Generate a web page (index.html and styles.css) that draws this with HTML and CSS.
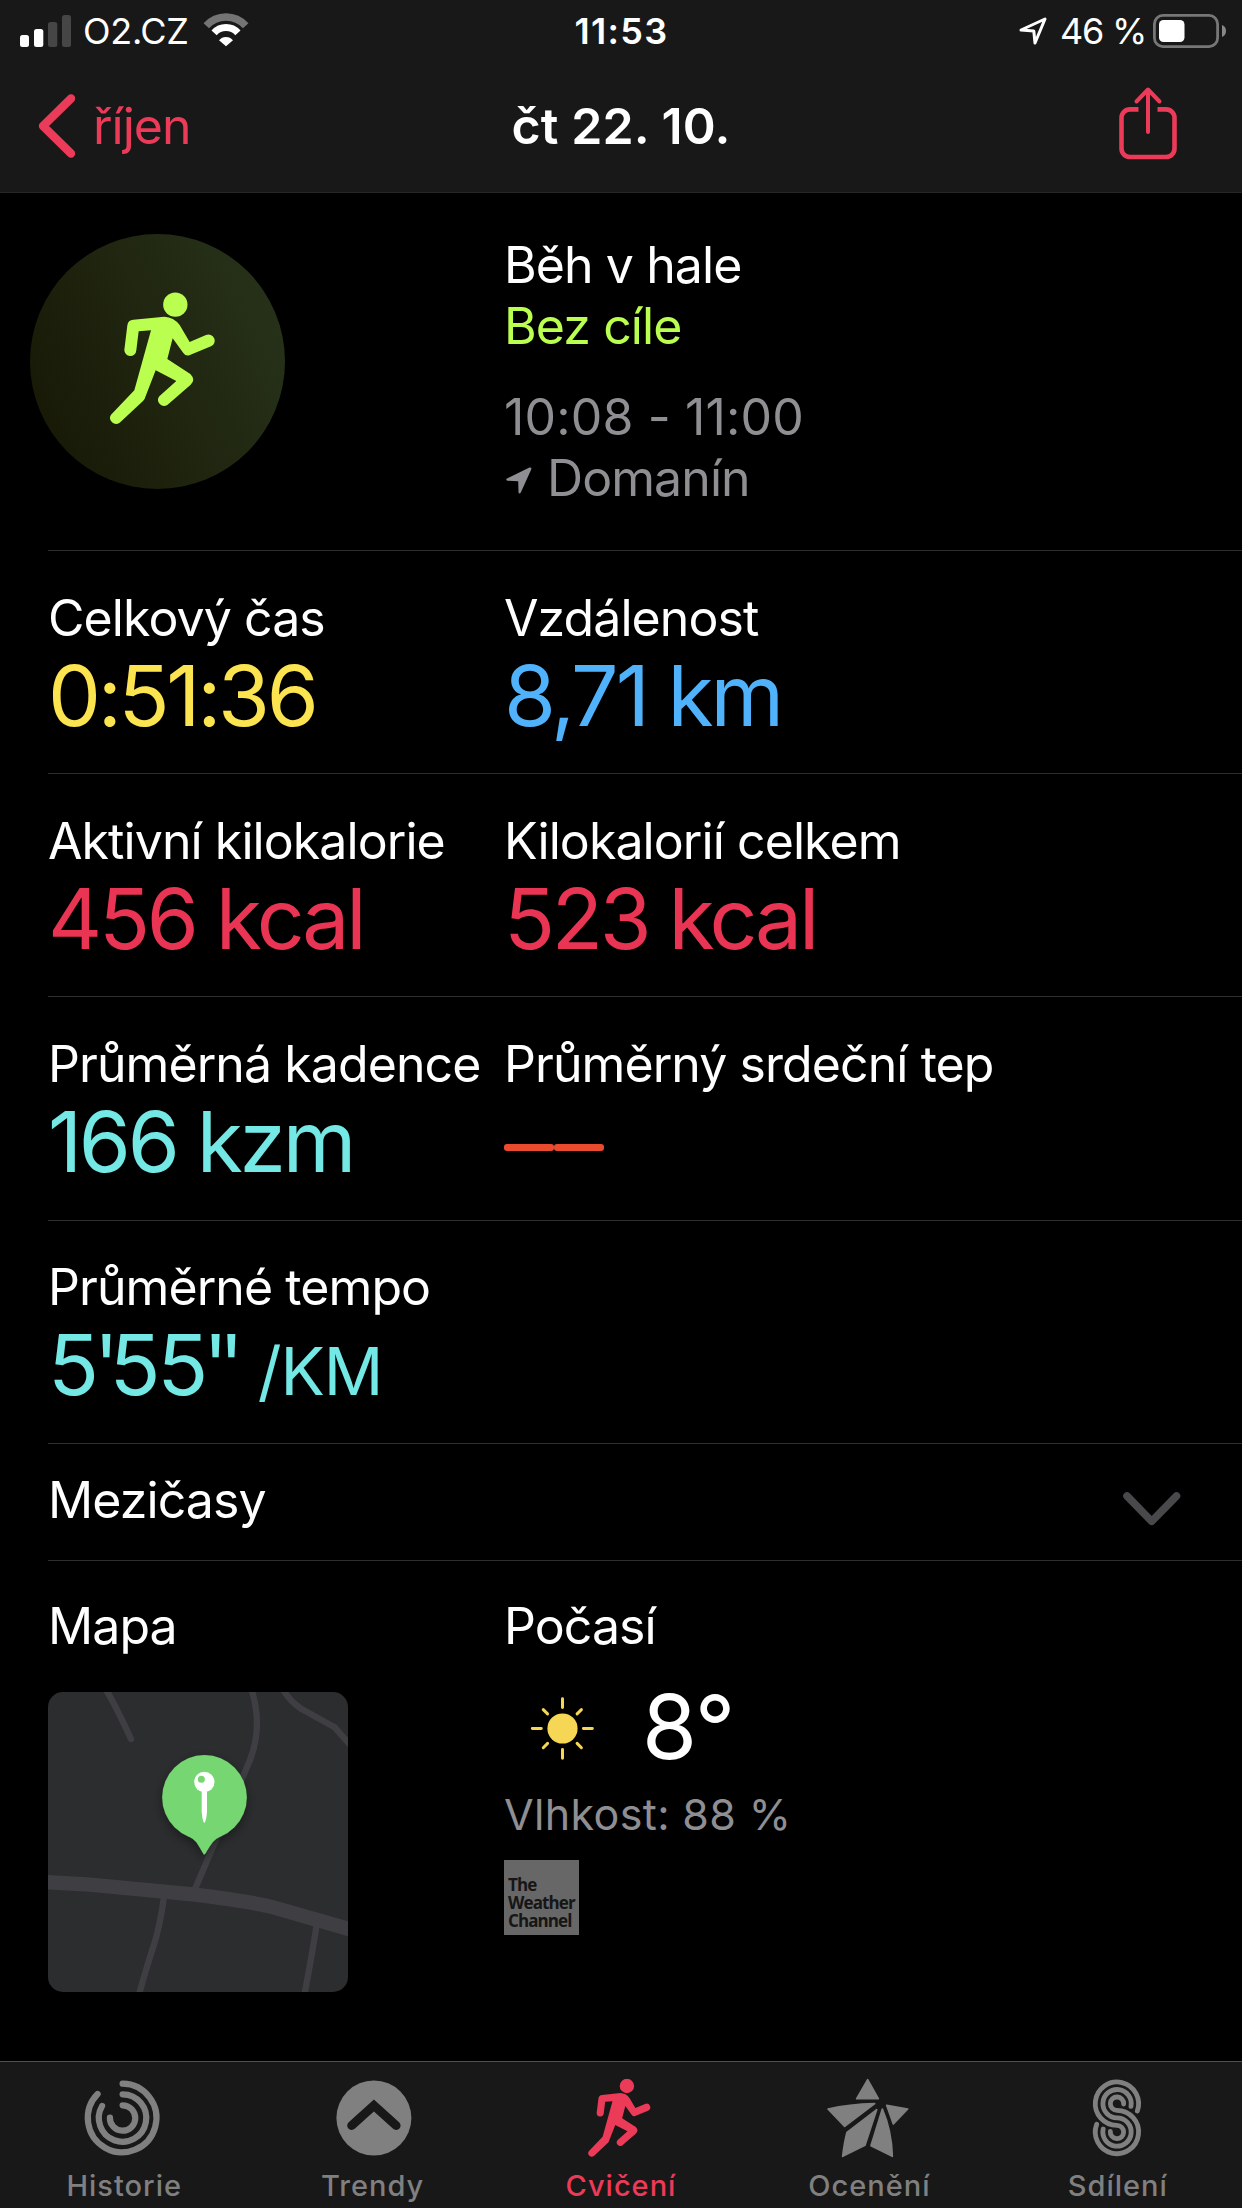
FILE: index.html
```html
<!DOCTYPE html>
<html lang="cs">
<head>
<meta charset="utf-8">
<title>čt 22. 10.</title>
<link rel="stylesheet" href="styles.css">
</head>
<body>
<svg class="defs" aria-hidden="true">
  <symbol id="runner" viewBox="329 277 318 400">
    <circle cx="528" cy="315" r="36.5"/>
    <path d="M495 351Q523 352 541 376L571 427L620 406A18 18 0 0 1 635 440L570 467Q559 470 552 460L520 416L504 478L573 523Q590 540 574 555L504 616A18 18 0 0 1 480 590L531 544L469 512L438 592Q437 598 431 604L361 669A18 18 0 0 1 335 645L405 572L455 392L418 395L411 452A18 18 0 0 1 375 450L384 377Q386 361 402 360Z"/>
  </symbol>
</svg>
<div class="screen">
  <header class="header">
    <div class="status">
      <div class="status-left">
        <svg class="signal" viewBox="0 0 51 32">
          <rect x="0" y="20" width="9" height="12" rx="2.5" fill="#fff"/>
          <rect x="14" y="14" width="9.3" height="18" rx="2.5" fill="#fff"/>
          <rect x="28" y="7" width="9.3" height="25" rx="2.5" fill="#464646"/>
          <rect x="42" y="0" width="9" height="32" rx="2.5" fill="#464646"/>
        </svg>
        <span class="carrier">O2.CZ</span>
        <svg class="wifi" viewBox="0 0 46 34" fill="none">
          <path d="M3.3 12.8A26.5 26.5 0 0 1 42.7 12.8" stroke="#747474" stroke-width="7.4"/>
          <path d="M11.1 19.8A16 16 0 0 1 34.9 19.8" stroke="#fff" stroke-width="7"/>
          <path d="M16 27.3A9 9 0 0 1 30 27.3L23 33.3Z" fill="#fff"/>
        </svg>
      </div>
      <span class="clock">11:53</span>
      <div class="status-right">
        <svg class="loc" viewBox="0 0 28 28" fill="none" stroke="#fff" stroke-width="3" stroke-linejoin="round">
          <path d="M2 13L26 2L16 26L14.8 14Z"/>
        </svg>
        <span class="percent">46 %</span>
        <svg class="battery" viewBox="0 0 74 34">
          <rect x="1.4" y="1.4" width="63.2" height="31.2" rx="8.5" fill="none" stroke="#777" stroke-width="2.8"/>
          <rect x="6" y="6" width="25.5" height="22" rx="4.5" fill="#fff"/>
          <path d="M69 11Q73 12.5 73 17Q73 21.5 69 23Z" fill="#888"/>
        </svg>
      </div>
    </div>
    <nav class="nav">
      <a class="back">
        <svg class="back-icon" viewBox="0 0 38 64" fill="none" stroke="#ec3a59" stroke-width="8.4" stroke-linecap="round" stroke-linejoin="round"><path d="M33 4.5L5 32L33 59.500"/></svg>
        <span>říjen</span>
      </a>
      <h1 class="title">čt 22. 10.</h1>
      <svg class="share" viewBox="0 0 58 74" fill="none" stroke="#ec3a59" stroke-width="4.6">
        <path d="M19.5 22.4H11A8.5 8.5 0 0 0 2.5 31V61.5A8.5 8.5 0 0 0 11 70H47A8.500 8.500 0 0 0 55.500 61.500V31A8.500 8.500 0 0 0 47 22.400H38.500"/>
        <path d="M29 45V3.500M17.500 14.500L29 2.500L40.500 14.500" stroke-width="4" stroke-linecap="round" stroke-linejoin="round"/>
      </svg>
    </nav>
  </header>

  <main class="main">
    <section class="row summary">
      <div class="badge"><svg class="badge-icon"><use href="#runner"/></svg></div>
      <div class="summary-text">
        <div>Běh v hale</div>
        <div class="goal">Bez cíle</div>
        <div class="muted period">10:08 - 11:00</div>
        <div class="muted place">
          <svg class="place-icon" viewBox="0 0 26 27"><path d="M1 11.500L23.500 .5Q26 0 25.200 2.500L14.800 25.500Q13.500 27.500 12.500 25.500L12.200 14.200L1.500 13.800Q-.8 13 1 11.500Z"/></svg>
          <span>Domanín</span>
        </div>
      </div>
    </section>

    <section class="row metrics">
      <div><div class="label">Celkový čas</div><div class="value yellow">0:51:36</div></div>
      <div><div class="label">Vzdálenost</div><div class="value blue">8,71 km</div></div>
    </section>
    <section class="row metrics">
      <div><div class="label">Aktivní kilokalorie</div><div class="value red">456 kcal</div></div>
      <div><div class="label">Kilokalorií celkem</div><div class="value red">523 kcal</div></div>
    </section>
    <section class="row metrics tall">
      <div><div class="label">Průměrná kadence</div><div class="value cyan">166 kzm</div></div>
      <div><div class="label">Průměrný srdeční tep</div><div class="dashes"><i></i><i></i></div></div>
    </section>
    <section class="row metrics">
      <div><div class="label">Průměrné tempo</div><div class="value cyan">5<span class="tick">'</span>55<span class="tick">''</span> <small class="unit">/KM</small></div></div>
    </section>

    <section class="row splits">
      <span>Mezičasy</span>
      <svg class="chevron" viewBox="0 0 58 34" fill="none" stroke="#49494b" stroke-width="7.6" stroke-linecap="round" stroke-linejoin="round"><path d="M4 4L28.700 29.300L53.500 4"/></svg>
    </section>

    <section class="extras">
      <div>
        <div class="label">Mapa</div>
        <svg class="map" viewBox="144 336 900 900">
          <defs>
            <filter id="pin-shadow" x="-30%" y="-30%" width="160%" height="160%">
              <feDropShadow dx="0" dy="12" stdDeviation="16" flood-color="#000" flood-opacity=".4"/>
            </filter>
          </defs>
          <rect x="144" y="336" width="900" height="900" fill="#2c2d2f"/>
          <g fill="none" stroke="#3f3f43" stroke-width="19" stroke-linecap="round" stroke-linejoin="round">
            <path d="M318 330Q345 372 393 477"/>
            <path d="M755 330Q789 440 750 540L586 925"/>
            <path d="M850 330Q870 364 906 388L1004 442L1050 494"/>
            <path d="M492 950Q480 1040 460 1100T418 1240"/>
            <path d="M950 1035Q935 1130 914 1240"/>
            <path d="M130 906L270 914L586 944Q760 966 820 982L1060 1051" stroke-width="43"/>
          </g>
          <g fill="#76d672" filter="url(#pin-shadow)">
            <circle cx="613.5" cy="652" r="127"/>
            <path d="M564 768Q580 776 589 787Q598 800 609 820Q613 827 617 820Q628 800 638 787Q647 776 663 768Z"/>
          </g>
          <circle cx="613" cy="606" r="30.5" fill="#fff"/>
          <circle cx="604" cy="598" r="10.5" fill="#76d672"/>
          <path d="M605 630H621V695Q619 722 613 729Q607 722 605 695Z" fill="#fff"/>
        </svg>
      </div>
      <div>
        <div class="label">Počasí</div>
        <div class="weather">
          <svg class="sun" viewBox="153 347 190 190" stroke="#f6d755" stroke-width="9" stroke-linecap="round">
            <circle cx="248" cy="442" r="45.5" fill="#f6d755" stroke="none"/>
            <path d="M248 352V379M248 505V532M157 442H184M311 442H338M190 385L203 398M305 385L292 398M190 500L203 487M305 500L292 487"/>
          </svg>
          <span class="temp">8°</span>
        </div>
        <div class="muted humidity">Vlhkost: 88 %</div>
        <div class="twc">The<br>Weather<br>Channel</div>
      </div>
    </section>
  </main>

  <footer class="tabs">
    <a class="tab">
      <svg class="tab-icon" viewBox="-38.600 -40 80 80" fill="none" stroke="currentColor" stroke-width="6.2" stroke-linecap="round">
        <path d="M0 -34.300A34.300 34.300 0 1 1 -25 -24"/>
        <path d="M0 -23.700A23.700 23.700 0 1 1 -20.500 -12"/>
        <path d="M0 -12.700A12.700 12.700 0 1 1 -12.700 -.5"/>
      </svg>
      <span>Historie</span>
    </a>
    <a class="tab">
      <svg class="tab-icon" viewBox="-40.900 -40 80 80">
        <circle r="37.5" fill="currentColor"/>
        <path d="M-22.200 7.500L0 -12.500L22.200 7.500" fill="none" stroke="#181818" stroke-width="9" stroke-linecap="round"/>
      </svg>
      <span>Trendy</span>
    </a>
    <a class="tab active">
      <svg class="tab-icon" viewBox="0 0 80 80"><use href="#runner" x="-2" y="0.5" width="80" height="79"/></svg>
      <span>Cvičení</span>
    </a>
    <a class="tab">
      <svg class="tab-icon" viewBox="85 58 240 240" fill="currentColor" stroke="currentColor" stroke-width="5" stroke-linejoin="round">
        <path d="M201 63L233 120H168Z"/>
        <path d="M82 151Q145 137 222 135L132 203Z"/>
        <path d="M258 140L321 151L278 196Z"/>
        <path d="M228 153L139 221Q131 250 126 293L193 260Z"/>
        <path d="M245 151Q273 215 275 293L211 261Z"/>
      </svg>
      <span>Ocenění</span>
    </a>
    <a class="tab">
      <svg class="tab-icon" viewBox="834 54 240 240" fill="none" stroke="currentColor" stroke-width="14.500" stroke-linecap="round">
        <path d="M1012 153A65 65 0 1 0 951 196A20 20 0 1 1 931 214"/>
        <path d="M993 139A42.500 42.500 0 1 0 951 173.500A42.500 42.500 0 1 1 909.500 207"/>
        <path d="M971 132A20 20 0 1 0 951 151A65 65 0 1 1 890 193"/>
      </svg>
      <span>Sdílení</span>
    </a>
  </footer>
</div>
</body>
</html>
```
FILE: styles.css
```css
* { box-sizing: border-box; }

body {
  margin: 0;
  background: #000;
  color: #fff;
  font-family: Inter, "Liberation Sans", sans-serif;
  font-size: 50px;
  letter-spacing: -0.92px;
}

svg { display: block; flex: none; overflow: visible; }
.defs { position: absolute; width: 0; height: 0; }

.screen {
  width: 1242px;
  height: 2208px;
  display: flex;
  flex-direction: column;
  overflow: hidden;
}

/* Header */
.header { background: #181818; border-bottom: 1px solid #272727; height: 193px; }

.status {
  display: grid;
  grid-template-columns: 1fr auto 1fr;
  align-items: center;
  height: 60px;
  padding: 2px 15px 0 20px;
  font-size: 36px;
  line-height: 58px;
  letter-spacing: -0.3px;
}
.status-left, .status-right { display: flex; align-items: center; }
.status-right { justify-content: flex-end; }
.signal { width: 51px; height: 32px; margin-right: 12px; }
.carrier { width: 105px; margin-right: 15px; white-space: nowrap; }
.wifi { width: 46px; height: 34px; margin-bottom: 2px; }
.clock { margin-right: 4px; font-weight: 600; letter-spacing: 1.3px; }
.loc { width: 28px; height: 28px; margin-right: 13px; }
.percent { width: 86px; margin-right: 7px; letter-spacing: -1.2px; white-space: nowrap; }
.battery { width: 74px; height: 34px; }

.nav {
  display: grid;
  grid-template-columns: 1fr auto 1fr;
  align-items: center;
  height: 132px;
  padding: 0 38px;
  line-height: 132px;
}
.back { display: flex; align-items: center; gap: 17px; color: #ec3a59; letter-spacing: -1px; }
.back-icon { width: 38px; height: 64px; }
.title { margin: 0; font-size: 50px; font-weight: 600; letter-spacing: 0.1px; }
.share { width: 58px; height: 74px; justify-self: end; margin: 0 27px 4px 0; }

/* Workout details */
.main { flex: 1; padding-left: 48px; line-height: 60px; }
.row { border-bottom: 1px solid #2e2e2f; }
.summary, .metrics, .extras { display: grid; grid-template-columns: 456px 1fr; }
.muted { color: #8e8e93; }

.summary { height: 358px; padding-top: 41px; }
.badge {
  display: flex;
  align-items: center;
  justify-content: center;
  width: 255px;
  height: 255px;
  margin-left: -18px;
  padding: 0 0 5px 8px;
  border-radius: 50%;
  background: linear-gradient(65deg, #161804 5%, #1f240f 45%, #28331a 95%);
}
.badge-icon { width: 106px; height: 133.3px; fill: #baff4f; }
.summary-text { padding-top: 1px; line-height: 61px; }
.goal { color: #baff4f; }
.period { margin-top: 30px; letter-spacing: 0.15px; }
.place { display: flex; align-items: center; gap: 15px; }
.place-icon { width: 26px; height: 27px; margin: 4px 0 0 2px; fill: #8e8e93; }

.metrics { height: 223px; padding-top: 37px; }
.metrics.tall { height: 224px; }
.metrics.tall + .metrics { padding-top: 36px; }
.label { white-space: nowrap; }
.value { margin-top: 3px; font-size: 84px; line-height: 90px; letter-spacing: -3.3px; white-space: nowrap; }
.tick { margin-left: -2px; letter-spacing: -9.5px; }
.unit { margin-left: 3px; font-size: 66px; letter-spacing: -1px; }
.yellow { color: #fbe44f; }
.blue { color: #50b2fb; letter-spacing: -3px; }
.red { color: #e93453; }
.cyan { color: #74e8e4; }
.dashes { display: flex; padding-top: 50px; }
.dashes i { width: 50px; height: 7px; border-radius: 3px; background: #ea4b2e; }

.splits {
  display: flex;
  align-items: center;
  justify-content: space-between;
  height: 117px;
  padding: 0 61px 5px 0;
}
.chevron { width: 58px; height: 34px; margin-top: 19px; }

.extras { padding-top: 35px; }
.map { width: 300px; height: 300px; margin-top: 36px; border-radius: 15px; overflow: hidden; }
.weather { display: flex; align-items: center; height: 90px; margin: 26px 0 16px 27px; }
.sun { width: 63px; height: 63px; margin-top: 2px; }
.temp { margin-left: 48px; font-size: 89px; line-height: 90px; }
.humidity { font-size: 43px; line-height: 52px; letter-spacing: 0.35px; }
.twc {
  width: 75px;
  height: 75px;
  margin-top: 20px;
  padding: 16px 0 0 4px;
  background: #676767;
  color: #161616;
  font: bold 17px/18px "Open Sans", sans-serif;
  letter-spacing: -0.9px;
}

/* Tab bar */
.tabs {
  display: grid;
  grid-template-columns: repeat(5, 1fr);
  height: 147px;
  border-top: 1px solid #505050;
  background: #181818;
  color: #808080;
}
.tab {
  display: flex;
  flex-direction: column;
  align-items: center;
  padding-top: 16px;
  font-size: 29px;
  font-weight: 500;
  line-height: 36px;
  letter-spacing: 1px;
}
.tab-icon { width: 80px; height: 80px; margin-bottom: 10px; }
.active { color: #ec3a59; }
.active .tab-icon { fill: #ec3a59; }
```
